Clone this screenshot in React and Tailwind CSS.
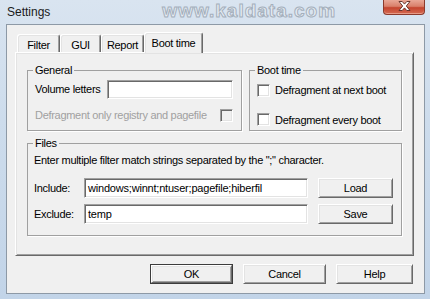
import React from 'react';

const sunken =
  'border border-t-[#a0a0a0] border-l-[#a0a0a0] border-b-white border-r-white shadow-[inset_1px_1px_0_#696969,inset_-1px_-1px_0_#e3e3e3]';
const raised =
  'bg-[#f0f0f0] border border-t-white border-l-white border-b-[#696969] border-r-[#696969] shadow-[inset_1px_1px_0_#e3e3e3,inset_-1px_-1px_0_#a0a0a0]';

function CheckBox({ disabled }) {
  return <div className={`w-[13px] h-[13px] shrink-0 ${sunken} ${disabled ? 'bg-[#f0f0f0]' : 'bg-white'}`} />;
}

function Button({ children, width, isDefault }) {
  if (isDefault) {
    return (
      <div className={`${width} h-[20px] border border-[#3c3c3c] flex`}>
        <div className={`flex-1 flex items-center justify-center ${raised}`}>{children}</div>
      </div>
    );
  }
  return <div className={`${width} h-[20px] flex items-center justify-center ${raised}`}>{children}</div>;
}

function Tab({ label, width, active }) {
  if (active) {
    return (
      <div
        className={`${width} h-[21px] -mb-px relative z-10 bg-[#f0f0f0] rounded-t-[3px] border-t border-l border-r border-t-white border-l-white border-r-[#696969] shadow-[inset_1px_1px_0_#e3e3e3,inset_-1px_0_0_#a0a0a0] flex justify-center pt-[2px]`}
      >
        {label}
      </div>
    );
  }
  return (
    <div
      className={`${width} h-[18px] bg-[#f0f0f0] rounded-t-[3px] border-t border-l border-r border-t-white border-l-white border-r-[#696969] shadow-[inset_1px_1px_0_#e3e3e3,inset_-1px_0_0_#a0a0a0] flex justify-center pt-[2px]`}
    >
      {label}
    </div>
  );
}

function Group({ title, className, children }) {
  return (
    <fieldset className={`border border-[#a0a0a0] shadow-[1px_1px_0_#fff] ${className}`}>
      <legend className="ml-[5px] px-[2px] leading-[13px]">{title}</legend>
      {children}
    </fieldset>
  );
}

export default function App() {
  return (
    <div className="w-[430px] h-[299px] overflow-hidden flex flex-col bg-[linear-gradient(180deg,#d9e4f0_0%,#cddcec_40%,#c2d4e8_100%)] font-['Liberation_Sans',Arial,sans-serif] text-[11px] tracking-[-0.3px] text-black">
      {/* title bar */}
      <div className="h-[24px] shrink-0 flex items-start">
        <div className="ml-[7px] mt-[5px] text-[12px] leading-[14px] tracking-normal text-[#1a1a1a]">Settings</div>
        <div className="ml-[112px] mt-[1px] text-[19px] leading-[19px] font-bold tracking-[1px] text-[#e6ecf2] [-webkit-text-stroke:1px_#a4afbc]">
          www.kaldata.com
        </div>
        <div className="ml-auto mr-[5px] w-[42px] h-[15px] rounded-b-[4px] border border-t-0 border-[#8b3a2c] bg-[linear-gradient(180deg,#e9a796_0%,#d9806b_45%,#c4452f_55%,#d56a52_100%)] shadow-[inset_0_-1px_0_#e79a86] flex items-center justify-center pb-[3px]">
          <svg width="13" height="10" viewBox="0 0 13 10">
            <path
              d="M1 0.5h3.2l2.3 2.6 2.3-2.6H12L8.3 5 12 9.5H8.8L6.5 6.9 4.2 9.5H1L4.7 5z"
              fill="#ffffff"
              stroke="#5b2a22"
              strokeWidth="0.9"
              strokeLinejoin="round"
            />
          </svg>
        </div>
      </div>

      {/* client area */}
      <div className="flex-1 ml-[6px] mr-[5px] mb-[5px] bg-[#f0f0f0] border border-[#8d99a6] flex flex-col">
        <div className="h-[27px] shrink-0 flex items-end pl-[10px]">
          <Tab label="Filter" width="w-[43px]" />
          <Tab label="GUI" width="w-[41px]" />
          <Tab label="Report" width="w-[43px]" />
          <Tab label="Boot time" width="w-[59px]" active />
        </div>

        <div className="ml-[8px] w-[399px] h-[204px] shrink-0 border border-t-white border-l-white border-b-[#696969] border-r-[#696969] shadow-[inset_1px_1px_0_#e3e3e3,inset_-1px_-1px_0_#a0a0a0] pt-[11px] pl-[11px]">
          <div className="flex gap-[7px]">
            <Group title="General" className="w-[215px] h-[67px]">
              <div className="pl-[7px] pt-[3px]">
                <div className="flex items-center">
                  <div className="w-[72px]">Volume letters</div>
                  <div className={`w-[126px] h-[19px] bg-white ${sunken}`} />
                </div>
                <div className="flex items-center mt-[8px]">
                  <div className="w-[185px] text-[#a0a0a0]">Defragment only registry and pagefile</div>
                  <CheckBox disabled />
                </div>
              </div>
            </Group>
            <Group title="Boot time" className="w-[153px] h-[67px]">
              <div className="pl-[7px] pt-[5px] flex flex-col gap-[13px]">
                <div className="flex items-center gap-[5px]">
                  <CheckBox />
                  <span>Defragment at next boot</span>
                </div>
                <div className="flex items-center gap-[5px]">
                  <CheckBox />
                  <span>Defragment every boot</span>
                </div>
              </div>
            </Group>
          </div>

          <Group title="Files" className="w-[375px] h-[99px] mt-[6px]">
            <div className="pl-[6px] pt-[4px]">
              <div className="leading-[13px]">Enter multiple filter match strings separated by the &quot;;&quot; character.</div>
              <div className="flex items-center mt-[11px]">
                <div className="w-[50px]">Include:</div>
                <div className={`w-[224px] h-[20px] bg-white ${sunken} flex items-center pl-[3px] tracking-[-0.2px]`}>
                  windows;winnt;ntuser;pagefile;hiberfil
                </div>
                <div className="ml-[10px]">
                  <Button width="w-[75px]">Load</Button>
                </div>
              </div>
              <div className="flex items-center mt-[6px]">
                <div className="w-[50px]">Exclude:</div>
                <div className={`w-[224px] h-[20px] bg-white ${sunken} flex items-center pl-[3px] tracking-[-0.2px]`}>
                  temp
                </div>
                <div className="ml-[10px]">
                  <Button width="w-[75px]">Save</Button>
                </div>
              </div>
            </div>
          </Group>
        </div>

        <div className="flex justify-end gap-[10px] pr-[11px] mt-[8px]">
          <Button width="w-[83px]" isDefault>
            OK
          </Button>
          <Button width="w-[83px]">Cancel</Button>
          <Button width="w-[77px]">Help</Button>
        </div>
      </div>
    </div>
  );
}
